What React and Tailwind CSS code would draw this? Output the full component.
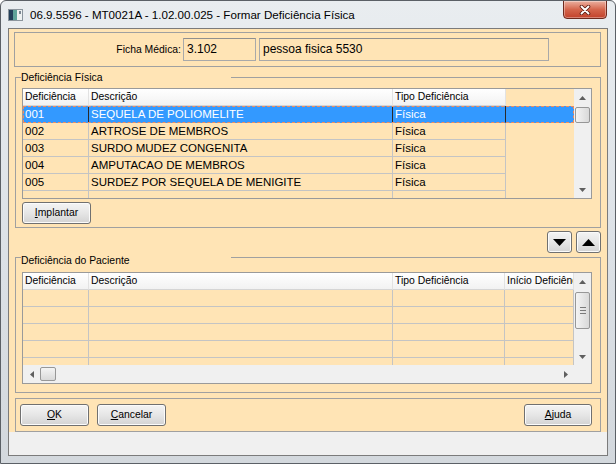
// Janela "Formar Deficiência Física" (tela Datasul / Windows 7)

const rows1 = [
  ["001", "SEQUELA DE POLIOMELITE", "Física"],
  ["002", "ARTROSE DE MEMBROS", "Física"],
  ["003", "SURDO MUDEZ CONGENITA", "Física"],
  ["004", "AMPUTACAO DE MEMBROS", "Física"],
  ["005", "SURDEZ POR SEQUELA DE MENIGITE", "Física"],
  ["", "", ""],
];

const cols1 = [
  { label: "Deficiência", w: "w-[66px]" },
  { label: "Descrição", w: "w-[304px]" },
  { label: "Tipo Deficiência", w: "w-[113px]" },
];

const cols2 = [
  { label: "Deficiência", w: "w-[66px]" },
  { label: "Descrição", w: "w-[304px]" },
  { label: "Tipo Deficiência", w: "w-[112px]" },
  { label: "Início Deficiência", w: "w-[69px]" },
];

function ScrollArrow({ dir }) {
  if (dir === "up")
    return (
      <svg width="7" height="4" viewBox="0 0 7 4">
        <polygon points="0,4 3.5,0 7,4" fill="#5f5f5f" />
      </svg>
    );
  if (dir === "down")
    return (
      <svg width="7" height="4" viewBox="0 0 7 4">
        <polygon points="0,0 7,0 3.5,4" fill="#5f5f5f" />
      </svg>
    );
  if (dir === "left")
    return (
      <svg width="4" height="7" viewBox="0 0 4 7">
        <polygon points="4,0 4,7 0,3.5" fill="#5f5f5f" />
      </svg>
    );
  return (
    <svg width="4" height="7" viewBox="0 0 4 7">
      <polygon points="0,0 0,7 4,3.5" fill="#5f5f5f" />
    </svg>
  );
}

function VScroll({ thumb, grip }) {
  return (
    <div className="flex h-full w-[17px] shrink-0 flex-col bg-[#f0f0f0]">
      <div className="flex h-[17px] shrink-0 items-center justify-center">
        <ScrollArrow dir="up" />
      </div>
      <div
        className={`mx-[1px] flex shrink-0 flex-col items-center justify-center gap-[2px] rounded-[2px] border border-[#979797] bg-linear-to-r from-[#f4f4f4] to-[#d9d9d9] ${thumb}`}
      >
        {grip && (
          <>
            <div className="h-px w-[6px] bg-[#7a7a7a]" />
            <div className="h-px w-[6px] bg-[#7a7a7a]" />
            <div className="h-px w-[6px] bg-[#7a7a7a]" />
          </>
        )}
      </div>
      <div className="flex-1" />
      <div className="flex h-[17px] shrink-0 items-center justify-center">
        <ScrollArrow dir="down" />
      </div>
    </div>
  );
}

function HeaderRow({ cols }) {
  return (
    <div className="flex h-[17px] shrink-0">
      {cols.map((c) => (
        <div
          key={c.label}
          className={`${c.w} h-full shrink-0 overflow-hidden whitespace-nowrap border-r border-b border-r-[#e2e2e2] border-b-[#d5d5d5] bg-linear-to-b from-white to-[#f2f2f2] pl-[2px] text-[10.4px] leading-[16px] text-black`}
        >
          {c.label}
        </div>
      ))}
    </div>
  );
}

function DataRow({ cols, values, selected }) {
  return (
    <div
      className={`flex h-[17px] shrink-0 ${
        selected
          ? "bg-[#3399ff] text-white outline-1 outline-dashed outline-[#f28c5c] -outline-offset-1"
          : "text-black"
      }`}
    >
      {cols.map((c, i) => (
        <div
          key={c.label}
          className={`${c.w} h-full shrink-0 overflow-hidden whitespace-nowrap border-r border-b pl-[2px] text-[11.5px] leading-[16px] ${
            selected ? "border-r-[#2a2a2a] border-b-transparent" : "border-[#c4c4c4]"
          }`}
        >
          {values[i]}
        </div>
      ))}
    </div>
  );
}

function Btn({ className, children }) {
  return (
    <div
      className={`flex shrink-0 items-center justify-center rounded-[3px] border border-[#707070] bg-linear-to-b from-[#f4f4f4] via-[#e6e6e6] to-[#d3d3d3] text-[10.4px] text-black shadow-[inset_0_0_0_1px_#fbfbfb] ${className}`}
    >
      {children}
    </div>
  );
}

function Group({ title, titleTop, className, children }) {
  return (
    <div className={`relative shrink-0 border border-[#a0a0a0] ${className}`}>
      <span
        className={`absolute left-[5px] ${titleTop} h-[15px] w-[210px] bg-[#ffe4b5] text-[10.4px] leading-[15px] text-black`}
      >
        {title}
      </span>
      {children}
    </div>
  );
}

export default function App() {
  return (
    <div className="flex h-[464px] w-[616px] flex-col overflow-hidden rounded-t-[6px] border border-[#5b6066] bg-linear-to-b from-[#e9edf0] via-[#dde2e7] to-[#d3d8dd] font-['Liberation_Sans',Arial,sans-serif]">
      {/* barra de título */}
      <div className="flex h-[27px] shrink-0 items-center">
        <svg className="ml-[7px]" width="15" height="12" viewBox="0 0 15 12">
          <rect x="0.5" y="0.5" width="14" height="11" fill="#f4f6f8" stroke="#8b959d" />
          <rect x="1" y="1" width="4" height="10" fill="#23405a" />
          <rect x="5" y="1" width="4" height="10" fill="#5fa39a" />
          <rect x="9" y="1" width="5" height="10" fill="#eef2f2" />
          <rect x="11" y="2" width="2" height="3" fill="#7d8893" />
        </svg>
        <span className="ml-[7px] whitespace-nowrap text-[11.6px] text-black">
          06.9.5596 - MT0021A - 1.02.00.025 - Formar Deficiência Física
        </span>
        <div className="-mt-px mr-[8px] ml-auto flex h-[19px] w-[44px] items-center justify-center self-start rounded-b-[4px] border border-[#6e2a1e] bg-linear-to-b from-[#eab0a0] via-[#d4654c] to-[#c2412a] shadow-[inset_0_0_0_1px_rgba(255,255,255,0.35)]">
          <svg width="12" height="10" viewBox="0 0 12 10">
            <path d="M2.5 1.5 L9.5 8.5 M9.5 1.5 L2.5 8.5" stroke="#5a1c12" strokeWidth="3.6" strokeLinecap="round" />
            <path d="M2.5 1.5 L9.5 8.5 M9.5 1.5 L2.5 8.5" stroke="#ffffff" strokeWidth="1.9" strokeLinecap="round" />
          </svg>
        </div>
      </div>

      {/* área cliente */}
      <div className="flex flex-1 px-[7px] pb-[7px]">
        <div className="flex h-[428px] w-[600px] flex-col border border-[#7b7b7b]">
          <div className="flex h-[403px] shrink-0 flex-col bg-[#ffe4b5]">
            {/* ficha médica */}
            <div className="ml-[5px] mt-[3px] flex h-[35px] w-[587px] shrink-0 items-start border border-[#a0a0a0] pt-[5px]">
              <div className="h-[23px] w-[168px] shrink-0 pr-[2px] text-right text-[10.4px] leading-[23px] text-black">
                Ficha Médica:
              </div>
              <div className="h-[23px] w-[73px] shrink-0 border border-[#a9a9a9] border-t-[#8f8f8f] pl-[3px] text-[12px] leading-[21px] text-black">
                3.102
              </div>
              <div className="ml-[3px] h-[23px] w-[290px] shrink-0 border border-[#a9a9a9] border-t-[#8f8f8f] pl-[3px] text-[12px] leading-[21px] text-black">
                pessoa fisica 5530
              </div>
            </div>

            {/* deficiência física */}
            <Group title="Deficiência Física" titleTop="-top-[8px]" className="ml-[6px] mt-[10px] h-[151px] w-[586px] pl-[6px] pt-[10px]">
              <div className="flex h-[111px] w-[570px] border border-[#9a9a9a]">
                <div className="flex h-full w-[551px] shrink-0 flex-col overflow-hidden">
                  <HeaderRow cols={cols1} />
                  {rows1.map((r, i) => (
                    <DataRow key={i} cols={cols1} values={r} selected={i === 0} />
                  ))}
                </div>
                <VScroll thumb="mt-[1px] h-[16px]" />
              </div>
              <Btn className="mt-[3px] h-[22px] w-[69px]">
                <span>
                  <span className="underline">I</span>mplantar
                </span>
              </Btn>
            </Group>

            {/* setas */}
            <div className="mt-[3px] flex h-[22px] shrink-0 justify-end gap-[4px] pr-[6px]">
              <Btn className="h-[22px] w-[25px]">
                <svg width="13" height="7" viewBox="0 0 13 7">
                  <polygon points="0,0 13,0 6.5,7" fill="#000" />
                </svg>
              </Btn>
              <Btn className="h-[22px] w-[25px]">
                <svg width="13" height="7" viewBox="0 0 13 7">
                  <polygon points="0,7 13,7 6.5,0" fill="#000" />
                </svg>
              </Btn>
            </div>

            {/* deficiência do paciente */}
            <Group title="Deficiência do Paciente" titleTop="-top-[5px]" className="ml-[6px] mt-[4px] h-[136px] w-[586px] pl-[6px] pt-[14px]">
              <div className="flex h-[112px] w-[570px] flex-col border border-[#9a9a9a]">
                <div className="flex h-[92px] shrink-0">
                  <div className="flex h-full w-[551px] shrink-0 flex-col overflow-hidden">
                    <HeaderRow cols={cols2} />
                    {[0, 1, 2, 3, 4].map((i) => (
                      <DataRow key={i} cols={cols2} values={["", "", "", ""]} />
                    ))}
                  </div>
                  <VScroll thumb="mt-[2px] h-[37px]" grip />
                </div>
                <div className="flex h-[18px] shrink-0 bg-[#f0f0f0]">
                  <div className="flex h-full w-[17px] shrink-0 items-center justify-center">
                    <ScrollArrow dir="left" />
                  </div>
                  <div className="my-[2px] w-[16px] shrink-0 rounded-[2px] border border-[#979797] bg-linear-to-b from-[#f4f4f4] to-[#d9d9d9]" />
                  <div className="flex-1" />
                  <div className="flex h-full w-[17px] shrink-0 items-center justify-center">
                    <ScrollArrow dir="right" />
                  </div>
                  <div className="h-full w-[17px] shrink-0 bg-[#f0f0f0]" />
                </div>
              </div>
            </Group>

            {/* botões */}
            <div className="ml-[6px] mt-[5px] flex h-[34px] w-[586px] shrink-0 items-start border border-[#a0a0a0] pl-[4px] pr-[8px] pt-[5px]">
              <Btn className="h-[22px] w-[69px]">
                <span>
                  <span className="underline">O</span>K
                </span>
              </Btn>
              <Btn className="ml-[8px] h-[22px] w-[69px]">
                <span>
                  <span className="underline">C</span>ancelar
                </span>
              </Btn>
              <Btn className="ml-auto h-[22px] w-[68px]">
                <span>
                  <span className="underline">A</span>juda
                </span>
              </Btn>
            </div>
          </div>
          <div className="flex-1 bg-[#f0f0f0]" />
        </div>
      </div>
    </div>
  );
}
